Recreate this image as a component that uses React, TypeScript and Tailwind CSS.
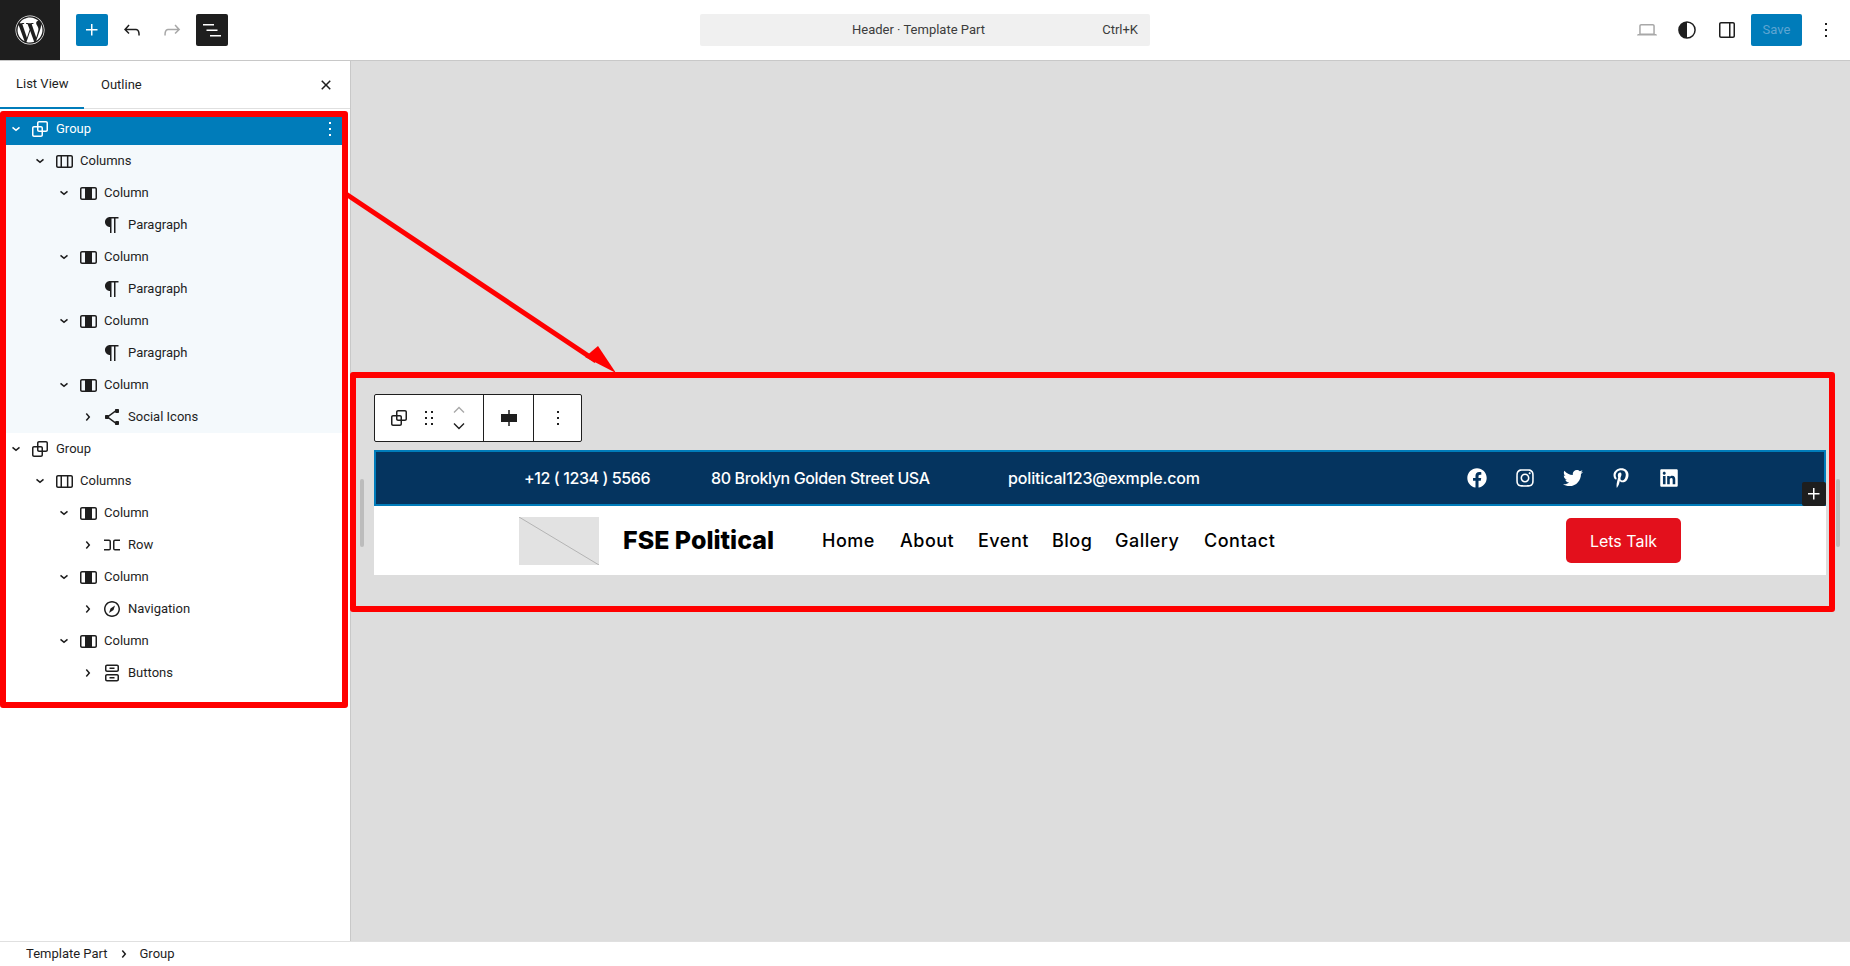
import { FaFacebook, FaInstagram, FaLinkedin, FaPinterestP, FaTwitter, FaWordpress } from 'react-icons/fa';

const icons = {
  plus: 'M11 12.5V17.5H12.5V12.5H17.5V11H12.5V6H11V11H6V12.5H11Z',
  undo: 'M18.3 11.7c-.6-.6-1.4-.9-2.3-.9H6.7l2.9-3.3-1.1-1-4.5 5L8.5 16l1-1-2.7-2.7H16c.5 0 .9.2 1.3.5 1 1 1 3.4 1 4.5v.3h1.5v-.2c0-1.5 0-4.3-1.5-5.7z',
  redo: 'M15.6 6.5l-1.1 1 2.9 3.3H8c-.9 0-1.7.3-2.3.9-1.4 1.5-1.4 4.2-1.4 5.6v.2h1.5v-.3c0-1.1 0-3.5 1-4.5.3-.3.7-.5 1.3-.5h9.2L14.5 15l1.1 1.1 4.6-4.6-4.6-5z',
  list: 'M3 6h11v1.5H3V6Zm3.5 5.5h11V13h-11v-1.5ZM21 17H10v1.5h11V17Z',
  group: 'M18 4h-7c-1.1 0-2 .9-2 2v3H6c-1.1 0-2 .9-2 2v7c0 1.1.9 2 2 2h7c1.1 0 2-.9 2-2v-3h3c1.1 0 2-.9 2-2V6c0-1.1-.9-2-2-2zm-4.5 14c0 .3-.2.5-.5.5H6c-.3 0-.5-.2-.5-.5v-7c0-.3.2-.5.5-.5h3V13c0 1.1.9 2 2 2h2.5v3zm0-4.5H11c-.3 0-.5-.2-.5-.5v-2.5H13c.3 0 .5.2.5.5v2.5zm5-.5c0 .3-.2.5-.5.5h-3V11c0-1.1-.9-2-2-2h-2.5V6c0-.3.2-.5.5-.5h7c.3 0 .5.2.5.5v7z',
  columns: 'M19 6H6c-1.1 0-2 .9-2 2v9c0 1.1.9 2 2 2h13c1.1 0 2-.9 2-2V8c0-1.1-.9-2-2-2zm-4.1 1.5v10H10v-10h4.9zM5.5 17V8c0-.3.2-.5.5-.5h2.5v10H6c-.3 0-.5-.2-.5-.5zm14 0c0 .3-.2.5-.5.5h-2.6v-10H19c.3 0 .5.2.5.5v9z',
  column: 'M19 6H6c-1.1 0-2 .9-2 2v9c0 1.1.9 2 2 2h13c1.1 0 2-.9 2-2V8c0-1.1-.9-2-2-2zM6 17.5c-.3 0-.5-.2-.5-.5V8c0-.3.2-.5.5-.5h3v10H6zm13.5-.5c0 .3-.2.5-.5.5h-3v-10h3c.3 0 .5.2.5.5v9z',
  paragraph: 'm9.99609 14v-.2251l.00391.0001v6.225h1.5v-14.5h2.5v14.5h1.5v-14.5h3v-1.5h-8.50391c-2.76142 0-5 2.23858-5 5 0 2.7614 2.23858 5 5 5z',
  share: 'M9 11.8l6.1-4.5c.1.4.4.7.9.7h2c.6 0 1-.4 1-1V5c0-.6-.4-1-1-1h-2c-.6 0-1 .4-1 1v.4l-6.4 4.8c-.2-.1-.4-.2-.6-.2H6c-.6 0-1 .4-1 1v2c0 .6.4 1 1 1h2c.2 0 .4-.1.6-.2l6.4 4.8v.4c0 .6.4 1 1 1h2c.6 0 1-.4 1-1v-2c0-.6-.4-1-1-1h-2c-.5 0-.8.3-.9.7L9 12.2v-.4z',
  row: 'M4 6.5h5a2 2 0 0 1 2 2v7a2 2 0 0 1-2 2H4V16h5a.5.5 0 0 0 .5-.5v-7A.5.5 0 0 0 9 8H4V6.5Zm16 0h-5a2 2 0 0 0-2 2v7a2 2 0 0 0 2 2h5V16h-5a.5.5 0 0 1-.5-.5v-7A.5.5 0 0 1 15 8h5V6.5Z',
  navigation: 'M12 4c-4.4 0-8 3.6-8 8s3.6 8 8 8 8-3.6 8-8-3.6-8-8-8zm0 14.5c-3.6 0-6.5-2.9-6.5-6.5S8.4 5.5 12 5.5s6.5 2.9 6.5 6.5-2.9 6.5-6.5 6.5zM9 16l4.5-3L15 8.4l-4.5 3L9 16z',
  buttons: 'M14.5 17.5H9.5V16H14.5V17.5Z M14.5 8H9.5V6.5H14.5V8Z M7 3.5H17C18.1046 3.5 19 4.39543 19 5.5V9C19 10.1046 18.1046 11 17 11H7C5.89543 11 5 10.1046 5 9V5.5C5 4.39543 5.89543 3.5 7 3.5ZM17 5H7C6.72386 5 6.5 5.22386 6.5 5.5V9C6.5 9.27614 6.72386 9.5 7 9.5H17C17.2761 9.5 17.5 9.27614 17.5 9V5.5C17.5 5.22386 17.2761 5 17 5Z M7 13H17C18.1046 13 19 13.8954 19 15V18.5C19 19.6046 18.1046 20.5 17 20.5H7C5.89543 20.5 5 19.6046 5 18.5V15C5 13.8954 5.89543 13 7 13ZM17 14.5H7C6.72386 14.5 6.5 14.7239 6.5 15V18.5C6.5 18.7761 6.72386 19 7 19H17C17.2761 19 17.5 18.7761 17.5 18.5V15C17.5 14.7239 17.2761 14.5 17 14.5Z',
  down: 'm15.99 10.889-3.988 3.418-3.988-3.418.976-1.14 3.012 2.582 3.012-2.581.976 1.139Z',
  right: 'M10.8622 8.04053L14.2805 12.0286L10.8622 16.0167L9.72327 15.0405L12.3049 12.0286L9.72327 9.01672L10.8622 8.04053Z',
  more: 'M13 19h-2v-2h2v2zm0-6h-2v-2h2v2zm0-6h-2V5h2v2z',
  drag: 'M8 7h2V5H8v2zm0 6h2v-2H8v2zm0 6h2v-2H8v2zm6-14v2h2V5h-2zm0 8h2v-2h-2v2zm0 6h2v-2h-2v2z',
  close: 'M12 13.06l3.712 3.713 1.061-1.06L13.061 12l3.712-3.712-1.06-1.06L12 10.938 8.288 7.227l-1.061 1.06L10.939 12l-3.712 3.712 1.06 1.061L12 13.061z',
  laptop: 'M20.5 16h-.7V8c0-1.1-.9-2-2-2H6.2c-1.1 0-2 .9-2 2v8h-.7c-.8 0-1.5.7-1.5 1.5h20c0-.8-.7-1.5-1.5-1.5zM5.7 8c0-.3.2-.5.5-.5h11.6c.3 0 .5.2.5.5v7.6H5.7V8z',
  contrast: 'M12 3.176a8.824 8.824 0 1 0 0 17.648 8.824 8.824 0 0 0 0-17.648Zm0 16.148V4.676a7.324 7.324 0 0 1 0 14.648Z',
  sidebar: 'M18 4H6c-1.1 0-2 .9-2 2v12c0 1.1.9 2 2 2h12c1.1 0 2-.9 2-2V6c0-1.1-.9-2-2-2zm-4 14.5H6c-.3 0-.5-.2-.5-.5V6c0-.3.2-.5.5-.5h8v13zm4.5-.5c0 .3-.2.5-.5.5h-2.5v-13H18c.3 0 .5.2.5.5v12z',
  align: 'M4 8h7.25V4h1.5v4H20v8h-7.25v4h-1.5v-4H4V8z',
};

type IconName = keyof typeof icons;

const Icon = ({ name, className = 'w-6 h-6' }: { name: IconName; className?: string }) => (
  <svg viewBox="0 0 24 24" className={className} fill="currentColor" fillRule="evenodd">
    <path d={icons[name]} />
  </svg>
);

const indent = ['pl-1', 'pl-7', 'pl-[52px]', 'pl-[76px]'];

const tree: { level: number; label: string; icon: IconName; arrow?: 'down' | 'right'; tone?: 'active' | 'child' }[] = [
  { level: 0, label: 'Group', icon: 'group', arrow: 'down', tone: 'active' },
  { level: 1, label: 'Columns', icon: 'columns', arrow: 'down', tone: 'child' },
  { level: 2, label: 'Column', icon: 'column', arrow: 'down', tone: 'child' },
  { level: 3, label: 'Paragraph', icon: 'paragraph', tone: 'child' },
  { level: 2, label: 'Column', icon: 'column', arrow: 'down', tone: 'child' },
  { level: 3, label: 'Paragraph', icon: 'paragraph', tone: 'child' },
  { level: 2, label: 'Column', icon: 'column', arrow: 'down', tone: 'child' },
  { level: 3, label: 'Paragraph', icon: 'paragraph', tone: 'child' },
  { level: 2, label: 'Column', icon: 'column', arrow: 'down', tone: 'child' },
  { level: 3, label: 'Social Icons', icon: 'share', arrow: 'right', tone: 'child' },
  { level: 0, label: 'Group', icon: 'group', arrow: 'down' },
  { level: 1, label: 'Columns', icon: 'columns', arrow: 'down' },
  { level: 2, label: 'Column', icon: 'column', arrow: 'down' },
  { level: 3, label: 'Row', icon: 'row', arrow: 'right' },
  { level: 2, label: 'Column', icon: 'column', arrow: 'down' },
  { level: 3, label: 'Navigation', icon: 'navigation', arrow: 'right' },
  { level: 2, label: 'Column', icon: 'column', arrow: 'down' },
  { level: 3, label: 'Buttons', icon: 'buttons', arrow: 'right' },
];

const TopBar = () => (
  <header className="h-[61px] shrink-0 flex items-center bg-white border-b border-[#c8c8c8] text-[#1e1e1e]">
    <div className="w-[60px] h-[60px] bg-[#1e1e1e] flex items-center justify-center text-white">
      <FaWordpress size={30} />
    </div>
    <div className="flex items-center ml-4 gap-2">
      <button className="w-8 h-8 rounded-[2px] bg-[#007cba] text-white flex items-center justify-center">
        <Icon name="plus" />
      </button>
      <button className="w-8 h-8 flex items-center justify-center">
        <Icon name="undo" />
      </button>
      <button className="w-8 h-8 flex items-center justify-center text-[#a8a8a8]">
        <Icon name="redo" />
      </button>
      <button className="w-8 h-8 rounded-[2px] bg-[#1e1e1e] text-white flex items-center justify-center">
        <Icon name="list" />
      </button>
    </div>
    <div className="ml-[472px] w-[450px] h-8 pr-[13px] rounded-[2px] bg-[#f0f0f0] relative flex items-center justify-center text-[13px] text-[#3c3c3c]">
      <span>Header · Template Part</span>
      <span className="absolute right-3">Ctrl+K</span>
    </div>
    <div className="flex items-center ml-auto mr-2">
      <button className="w-8 h-8 flex items-center justify-center text-[#a8a8a8] mr-2">
        <Icon name="laptop" />
      </button>
      <button className="w-8 h-8 flex items-center justify-center mr-2">
        <Icon name="contrast" />
      </button>
      <button className="w-8 h-8 flex items-center justify-center mr-2">
        <Icon name="sidebar" />
      </button>
      <button className="w-[51px] h-8 rounded-[2px] bg-[#007cba] text-[13px] text-[#5ea5d2] flex items-center justify-center">
        Save
      </button>
      <button className="w-8 h-8 ml-2 flex items-center justify-center">
        <Icon name="more" />
      </button>
    </div>
  </header>
);

const Sidebar = () => (
  <aside className="w-[351px] shrink-0 bg-white border-r border-[#c8c8c8] text-[13px] text-[#1e1e1e]">
    <div className="h-[48px] flex items-center border-b border-[#e0e0e0] relative">
      <div className="w-[84px] h-[48px] flex items-center pl-4 border-b-2 border-[#007cba] -mb-px">List View</div>
      <div className="ml-[17px]">Outline</div>
      <div className="ml-auto mr-3 w-6 h-6">
        <Icon name="close" />
      </div>
    </div>
    <div className="pt-1 pr-[4px]">
      {tree.map((node, i) => (
        <div
          key={i}
          className={`h-8 flex items-center ${indent[node.level]} ${
            node.tone === 'active' ? 'bg-[#007cba] text-white' : node.tone === 'child' ? 'bg-[#f4f9fc]' : ''
          }`}
        >
          <span className="w-6 h-6">{node.arrow && <Icon name={node.arrow} />}</span>
          <Icon name={node.icon} />
          <span className="ml-1">{node.label}</span>
          {node.tone === 'active' && (
            <span className="ml-auto mr-1">
              <Icon name="more" />
            </span>
          )}
        </div>
      ))}
    </div>
  </aside>
);

const BlockToolbar = () => (
  <div className="w-[208px] h-12 flex items-stretch bg-white border border-[#1e1e1e] rounded-[2px] text-[#1e1e1e]">
    <div className="w-[109px] flex items-center pl-[12px] border-r border-[#1e1e1e]">
      <Icon name="group" />
      <span className="ml-[6px]">
        <Icon name="drag" />
      </span>
      <span className="ml-[6px] w-6 h-6 flex flex-col items-center justify-between">
        <svg viewBox="0 0 12 8" className="w-3 h-2 text-[#a8a8a8]" fill="none" stroke="currentColor" strokeWidth="1.4">
          <path d="M1 6.5 6 1.5l5 5" />
        </svg>
        <svg viewBox="0 0 12 8" className="w-3 h-2" fill="none" stroke="currentColor" strokeWidth="1.4">
          <path d="M1 1.5l5 5 5-5" />
        </svg>
      </span>
    </div>
    <div className="w-[50px] flex items-center justify-center border-r border-[#1e1e1e]">
      <Icon name="align" />
    </div>
    <div className="flex-1 flex items-center justify-center">
      <Icon name="more" />
    </div>
  </div>
);

const HeaderPreview = () => (
  <div className="relative" style={{ fontFamily: 'Inter, sans-serif' }}>
    <div className="h-14 flex items-center bg-[#05345f] border-2 border-[#007cba] text-white text-[16px] font-medium">
      <span className="ml-[148px] w-[187px] tracking-[-0.4px]">+12 ( 1234 ) 5566</span>
      <span className="w-[297px] tracking-[-0.38px]">80 Broklyn Golden Street USA</span>
      <span className="w-[459px] tracking-[-0.15px]">political123@exmple.com</span>
      <div className="flex items-center gap-7">
        <FaFacebook size={20} />
        <FaInstagram size={20} />
        <FaTwitter size={20} />
        <FaPinterestP size={20} />
        <FaLinkedin size={20} />
      </div>
    </div>
    <button className="absolute right-0 top-8 w-6 h-6 rounded-[2px] bg-[#1e1e1e] text-white flex items-center justify-center">
      <Icon name="plus" />
    </button>
    <div className="h-[69px] flex items-center bg-white text-black">
      <div className="ml-[145px] w-20 h-12 bg-[#e2e2e2] relative overflow-hidden">
        <svg viewBox="0 0 80 48" className="w-full h-full" fill="none" stroke="#b4b4b4">
          <path d="M0 0l80 48" />
        </svg>
      </div>
      <span className="ml-6 w-[199px] text-[25px] font-extrabold">FSE Political</span>
      <nav className="flex text-[18px] font-medium tracking-[0.5px]">
        <span className="w-[78px]">Home</span>
        <span className="w-[78px]">About</span>
        <span className="w-[74px]">Event</span>
        <span className="w-[63px]">Blog</span>
        <span className="w-[89px]">Gallery</span>
        <span className="w-[362px]">Contact</span>
      </nav>
      <button className="w-[115px] h-[45px] rounded-[5px] bg-[#e3101c] text-white text-[16px]">Lets Talk</button>
    </div>
  </div>
);

// Red markup drawn over the screenshot
const Annotations = () => (
  <div className="absolute inset-0 pointer-events-none">
    <div className="absolute left-0 top-[111px] w-[348px] h-[597px] border-[6px] border-[#ff0000] rounded-[3px]" />
    <div className="absolute left-[350px] top-[372px] w-[1485px] h-[240px] border-[6px] border-[#ff0000] rounded-[3px]" />
    <svg className="absolute inset-0 w-full h-full" viewBox="0 0 1850 966">
      <path d="M346 194 596 361" stroke="#ff0000" strokeWidth="5" fill="none" />
      <path d="M598 346 616 373 585 357z" fill="#ff0000" />
    </svg>
  </div>
);

export default function App() {
  return (
    <div
      className="relative w-full h-[966px] flex flex-col overflow-hidden bg-white"
      style={{ fontFamily: 'Roboto, sans-serif' }}
    >
      <TopBar />
      <div className="flex-1 flex min-h-0">
        <Sidebar />
        <main className="flex-1 bg-[#dddddd] pl-[23px] pr-[24px] pt-[333px] relative">
          <div className="absolute left-[9px] top-[418px] w-1 h-[68px] rounded bg-[#bcbcbc]" />
          <div className="absolute right-[10px] top-[418px] w-1 h-[68px] rounded bg-[#bcbcbc]" />
          <BlockToolbar />
          <div className="mt-2">
            <HeaderPreview />
          </div>
        </main>
      </div>
      <footer className="h-[25px] shrink-0 flex items-center pl-[26px] bg-white border-t border-[#e0e0e0] text-[13px] text-[#1e1e1e]">
        <span>Template Part</span>
        <span className="w-6 h-6 mx-1">
          <Icon name="right" />
        </span>
        <span>Group</span>
      </footer>
      <Annotations />
    </div>
  );
}
